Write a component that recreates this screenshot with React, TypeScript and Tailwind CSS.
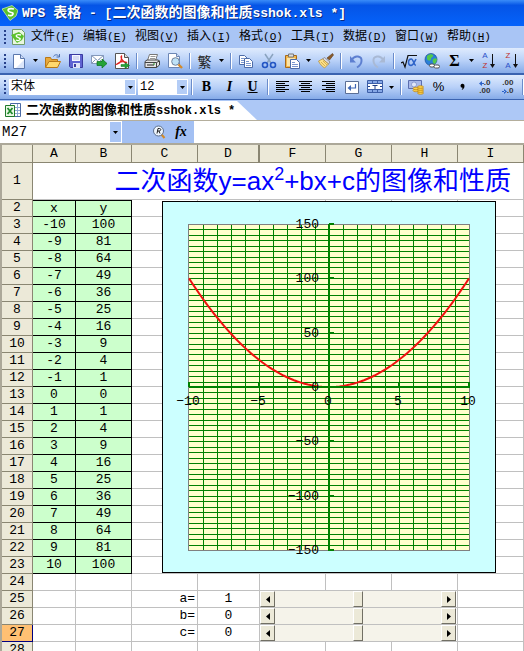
import { useState } from "react";
import type { ReactNode } from "react";

const MONO = "font-['Liberation_Mono','Noto_Sans_CJK_SC',monospace]";

const menus = [
  ["文件", "F"],
  ["编辑", "E"],
  ["视图", "V"],
  ["插入", "I"],
  ["格式", "O"],
  ["工具", "T"],
  ["数据", "D"],
  ["窗口", "W"],
  ["帮助", "H"],
];

const columns = ["A", "B", "C", "D", "F", "G", "H", "I"];

function Svg({ children }: { children: ReactNode }) {
  return (
    <svg width="16" height="16" viewBox="0 0 16 16" aria-hidden="true">
      {children}
    </svg>
  );
}

const icons: Record<string, ReactNode> = {
  new: (
    <Svg>
      <path d="M2.500 1.500h7l4 4v10h-11z" fill="#fff" stroke="#5b78ad" />
      <path d="M5 15L13 7v8z" fill="#dbe6fa" />
      <path d="M9.500 1.500v4h4" fill="#cfdcf5" stroke="#5b78ad" />
    </Svg>
  ),
  open: (
    <Svg>
      <path d="M.5 14V4.500h5l1 2h6V9" fill="#e8a93c" stroke="#b87818" />
      <path d="M.5 14.500L4 8.500h11.500l-3 6z" fill="#ffd86e" stroke="#b87818" />
      <path d="M8.500 3.500c1-2 4-2.500 5.500 0M14.500 1v3h-3" fill="none" stroke="#4b6fb0" />
    </Svg>
  ),
  save: (
    <Svg>
      <path d="M1.500 1.500h13v13h-12l-1-1z" fill="#5f63d2" stroke="#3a3aa0" />
      <path d="M4 2h8v6H4z" fill="#f4f6ff" />
      <path d="M5 4h6M5 6h6" stroke="#b9c1e6" />
      <path d="M5 10h7v5H5z" fill="#dfe3f7" />
      <path d="M6 11h2v3H6z" fill="#3a3aa0" />
    </Svg>
  ),
  mail: (
    <Svg>
      <path d="M.5 2.500h12v8H.5z" fill="#fff" stroke="#8499bb" />
      <path d="M.5 2.500l6 5 6-5M.5 10.500l4-4M12.500 10.500l-4-4" fill="none" stroke="#8499bb" />
      <path d="M6 8.500h5V6l5 4.500-5 4.500v-2.500H6z" fill="#25a336" stroke="#087018" strokeWidth=".7" />
    </Svg>
  ),
  pdf: (
    <Svg>
      <path d="M1.500.5h9l4 4v11h-13z" fill="#fff" stroke="#555" />
      <path d="M10.500.5v4h4" fill="#ddd" stroke="#555" />
      <path d="M3 11c4-1 5-4 4.500-8C6 4 9 10 13 9.500 9 8 5 9 3 11z" fill="none" stroke="#e02020" strokeWidth="1.300" />
      <path d="M7 11.500h4V9.500l4.500 3-4.500 3v-2H7z" fill="#25a336" stroke="#087018" strokeWidth=".5" />
    </Svg>
  ),
  print: (
    <Svg>
      <path d="M5.500 1.500h8l-2 6h-8z" fill="#fff" stroke="#777" />
      <path d="M6.500 3.500h5M6 5.500h5" stroke="#999" />
      <path d="M1 8.500L3 7h11l1.500 1v4l-3 2.500H1z" fill="#e4e4e4" stroke="#444" />
      <path d="M1 9.500h11.500l3-1.500M12.500 9.500v5" fill="none" stroke="#444" />
      <path d="M3 12h7" stroke="#222" />
      <path d="M9 11h2" stroke="#2a9b2a" />
    </Svg>
  ),
  preview: (
    <Svg>
      <path d="M1.500.5h8l3 3v11h-11z" fill="#fff" stroke="#6d87b5" />
      <path d="M9.500.5v3h3" fill="#cfdcf5" stroke="#6d87b5" />
      <circle cx="8.500" cy="8.500" r="3.800" fill="#bfe2f7" stroke="#71829b" />
      <path d="M11.500 11.500l3.500 3.500" stroke="#d48a28" strokeWidth="2.400" />
    </Svg>
  ),
  copy: (
    <Svg>
      <path d="M1.500 2.500h5l3 3v6h-8z" fill="#fff" stroke="#4d6ca8" />
      <path d="M3 5.500h3M3 7.500h4M3 9.500h4" stroke="#7b97cf" />
      <path d="M6.500 5.500h5l3 3v6h-8z" fill="#fff" stroke="#4d6ca8" />
      <path d="M8 8.500h3M8 10.500h5M8 12.500h5" stroke="#7b97cf" />
    </Svg>
  ),
  cut: (
    <Svg>
      <path d="M4 1l6 9M12 1L6 10" stroke="#8aa3bf" strokeWidth="1.500" />
      <circle cx="4" cy="12" r="2.500" fill="none" stroke="#2255c4" strokeWidth="1.600" />
      <circle cx="12" cy="12" r="2.500" fill="none" stroke="#2255c4" strokeWidth="1.600" />
    </Svg>
  ),
  paste: (
    <Svg>
      <path d="M1.500 2.500h11v12h-11z" fill="#f2b84c" stroke="#a5681c" />
      <path d="M4.500 1h5v3h-5z" fill="#ddd" stroke="#777" />
      <path d="M3 5h8v8H3z" fill="#fbe3a8" />
      <path d="M6.500 6.500h6l3 3v6h-9z" fill="#fff" stroke="#4d6ca8" />
      <path d="M8 9.500h3M8 11.500h6M8 13.500h6" stroke="#7b97cf" />
    </Svg>
  ),
  brush: (
    <Svg>
      <path d="M14.500.5l1 1.500-4 5-2.500-2z" fill="#8a5a2a" stroke="#5d3a14" strokeWidth=".6" />
      <path d="M6.500 4.500l5.500 4.500-1.500 2-6-5z" fill="#d8d8e4" stroke="#777" strokeWidth=".7" />
      <path d="M4.500 6l6 5-4 4C4 13 2 11.500.5 8z" fill="#fbe08a" stroke="#b58a30" strokeWidth=".7" />
      <path d="M3 9l4 4M5 8l4 4" stroke="#c99c3c" strokeWidth=".7" />
    </Svg>
  ),
  undo: (
    <Svg>
      <path d="M4 6.500C7 1.500 14 3 13.500 8c-.2 3-2 5-4.500 6.500" fill="none" stroke="#5d7fd0" strokeWidth="2" />
      <path d="M2 3v6.500h6z" fill="#5d7fd0" />
    </Svg>
  ),
  redo: (
    <Svg>
      <path d="M12 6.500C9 1.500 2 3 2.500 8c.2 3 2 5 4.500 6.500" fill="none" stroke="#a9b9d4" strokeWidth="2" />
      <path d="M14 3v6.500H8z" fill="#a9b9d4" />
    </Svg>
  ),
  sqrt: (
    <Svg>
      <path d="M0 10l2-1 2 5L7 2.500h9" fill="none" stroke="#111" strokeWidth="1.200" />
      <path d="M15 6c-1.500 3-3 6.500-5 6.500s-2.500-1.500-2.500-3.200S8.500 6 10.300 6c2.200 0 2.200 6 4.500 6.500" fill="none" stroke="#2d63c8" strokeWidth="1.500" />
    </Svg>
  ),
  globe: (
    <Svg>
      <circle cx="7" cy="6.500" r="6" fill="#2a7fd8" stroke="#1a4d91" strokeWidth=".7" />
      <path d="M3 3c2-2 5-2 6-1 1 2-2 2-2 4S4 8 3 6zM9 6c2-1 3-1 4 0 0 3-2 5-3 5-1-1-2-3-1-5z" fill="#55c94a" />
      <rect x="5.500" y="11" width="5" height="3" rx="1.500" fill="#fff" stroke="#555" />
      <rect x="10" y="12" width="5.500" height="3" rx="1.500" fill="#fff" stroke="#555" />
    </Svg>
  ),
  left: (
    <Svg>
      <path d="M1 2.500h13M1 4.500h9M1 6.500h13M1 8.500h9M1 10.500h13M1 12.500h9" stroke="#000" />
    </Svg>
  ),
  center: (
    <Svg>
      <path d="M1 2.500h13M3 4.500h9M1 6.500h13M3 8.500h9M1 10.500h13M3 12.500h9" stroke="#000" />
    </Svg>
  ),
  right: (
    <Svg>
      <path d="M1 2.500h13M5 4.500h9M1 6.500h13M5 8.500h9M1 10.500h13M5 12.500h9" stroke="#000" />
    </Svg>
  ),
  wrap: (
    <Svg>
      <path d="M1.500 2.500h13v12h-13z" fill="#fff" stroke="#5b6f96" />
      <path d="M11.500 5v4h-6" fill="none" stroke="#3d66b5" strokeWidth="1.200" />
      <path d="M3.500 9l3.500-3v6z" fill="#3d66b5" />
    </Svg>
  ),
  merge: (
    <Svg>
      <path d="M.5 1.500h15v12H.5z" fill="#fff" stroke="#3d5fa8" />
      <path d="M1 2h14v2H1zM1 11h14v2H1z" fill="#87a8e6" />
      <path d="M.5 4.500h15M.5 10.500h15M5.500 1.500v3M10.500 1.500v3M5.500 10.500v3M10.500 10.500v3" stroke="#3d5fa8" />
      <path d="M5.500 6.500h5M8 6.500v3.500M1 7.500h2M13 7.500h2" stroke="#223f85" />
    </Svg>
  ),
  money: (
    <Svg>
      <path d="M.5 1.500h13v8H.5z" fill="#a9b9ea" stroke="#5a6dae" />
      <circle cx="6" cy="5.500" r="2.500" fill="#dfe6fa" stroke="#6a7cba" strokeWidth=".6" />
      <g fill="#ffd34a" stroke="#b88316" strokeWidth=".7">
        <ellipse cx="8" cy="11.500" rx="3" ry="1.300" />
        <ellipse cx="8" cy="9.500" rx="3" ry="1.300" />
        <ellipse cx="12.500" cy="14" rx="3" ry="1.300" />
        <ellipse cx="12.500" cy="12" rx="3" ry="1.300" />
        <ellipse cx="12.500" cy="10" rx="3" ry="1.300" />
        <ellipse cx="12.500" cy="8" rx="3" ry="1.300" />
      </g>
    </Svg>
  ),
  comma: (
    <Svg>
      <path d="M6.500 6.500a2 2 0 1 1 4 .5c0 2-1.200 3.500-3 4 .8-1 1-1.500 1-2.300A2 2 0 0 1 6.500 6.500z" fill="#000" />
    </Svg>
  ),
};

function Caret() {
  return (
    <svg width="5" height="3" viewBox="0 0 5 3" aria-hidden="true">
      <path d="M0 0h5L2.500 3z" fill="#000" />
    </svg>
  );
}

function Tool({ label, children }: { label: string; children: ReactNode }) {
  return (
    <button
      aria-label={label}
      className="flex h-6 w-[23px] shrink-0 items-center justify-center"
    >
      {children}
    </button>
  );
}

function DropArrow({ label }: { label: string }) {
  return (
    <button
      aria-label={label}
      className="flex h-6 w-[11px] shrink-0 items-center justify-center"
    >
      <Caret />
    </button>
  );
}

function Separator() {
  return (
    <div className="flex w-[7px] shrink-0 justify-center">
      <div className="h-4 w-[2px] border-r border-white bg-[#6a8ccb]" />
    </div>
  );
}

function Grip() {
  return (
    <div className="flex w-[7px] shrink-0 flex-col items-end gap-[2px] pr-[1px]">
      {[0, 1, 2, 3].map((i) => (
        <div key={i} className="size-[2px] bg-[#27418a]" />
      ))}
    </div>
  );
}

function SortIcon({ top, bottom }: { top: string; bottom: string }) {
  return (
    <span className="flex items-center gap-[2px] font-['Liberation_Sans',sans-serif] text-[8px] leading-[10px]">
      <span className="flex flex-col">
        <span className={top === "A" ? "text-[#2d52c8]" : "text-[#c03030]"}>{top}</span>
        <span className={bottom === "A" ? "text-[#2d52c8]" : "text-[#c03030]"}>{bottom}</span>
      </span>
      <svg width="5" height="14" viewBox="0 0 5 14" aria-hidden="true">
        <path d="M2.500 0v12" stroke="#111" />
        <path d="M0 10h5l-2.500 4z" fill="#111" />
      </svg>
    </span>
  );
}

function Decimals({ more }: { more?: boolean }) {
  return (
    <span className="flex flex-col items-end font-['Liberation_Sans',sans-serif] text-[8px] leading-[8px] font-bold text-[#333]">
      <span className="flex items-center">
        {more && (
          <svg width="5" height="5" viewBox="0 0 5 5" aria-hidden="true">
            <path d="M0 2.500L3 0v5zM2 2h3v1H2z" fill="#2d63c8" />
          </svg>
        )}
        {more ? ".0" : ".00"}
      </span>
      <span className="flex items-center">
        {!more && (
          <svg width="5" height="5" viewBox="0 0 5 5" aria-hidden="true">
            <path d="M5 2.500L2 0v5zM0 2h3v1H0z" fill="#2d63c8" />
          </svg>
        )}
        {more ? ".00" : ".0"}
      </span>
    </span>
  );
}

function TitleBar() {
  return (
    <header className="flex h-[26px] shrink-0 items-center bg-linear-to-b from-[#3a8cf8] via-[#0554e6] via-20% to-[#0563fb] pl-[2px] font-bold text-white">
      <svg width="16" height="16" viewBox="0 0 16 16" aria-hidden="true">
        <path d="M0 4l10-3.500 6 5-2 5.500-6 4.500z" fill="#5cc22c" stroke="#d5f5b8" strokeWidth=".7" />
        <path d="M12 4C8 3 5 4 6.500 6s5 1 4.500 3-3 2-5 1" fill="none" stroke="#fff" strokeWidth="1.700" />
      </svg>
      <h1 className={`${MONO} ml-1 text-[13px] whitespace-pre [text-shadow:1px_1px_0_#0a2a80]`}>
        WPS <span className="text-[14px]">表格</span> - [
        <span className="text-[14px]">二次函数的图像和性质</span>sshok.xls *]
      </h1>
    </header>
  );
}

function MenuBar() {
  return (
    <nav className="flex h-[22px] shrink-0 items-center bg-[#a9c5f5]">
      <Grip />
      <svg className="ml-1 shrink-0" width="15" height="16" viewBox="0 0 15 16" aria-hidden="true">
        <path d="M1.500.5h9l3 3v12h-12z" fill="#e9f7e0" stroke="#6f9d68" />
        <path d="M0 6l8-3 5 4-2 4-5 3z" fill="#5cc22c" />
        <path d="M10 6C6 5 4 6.500 6 8s4 1 3 2.500-3 1-4 .5" fill="none" stroke="#fff" strokeWidth="1.300" />
      </svg>
      <div className="ml-[5px] flex">
        {menus.map(([name, key]) => (
          <button key={key} className={`${MONO} w-[52px] text-left text-[12px] leading-4 whitespace-nowrap`}>
            {name}
            <span className="text-[11px]">
              (<u>{key}</u>)
            </span>
          </button>
        ))}
      </div>
    </nav>
  );
}

const barClass =
  "flex shrink-0 items-center overflow-hidden border-b border-[#3a63b0] bg-linear-to-b from-[#dfebfd] via-[#b9d1f8] to-[#86abe8]";

function StandardBar() {
  return (
    <div className={`${barClass} h-[26px]`}>
      <Grip />
      <Tool label="新建">{icons.new}</Tool>
      <DropArrow label="新建选项" />
      <Tool label="打开">{icons.open}</Tool>
      <Tool label="保存">{icons.save}</Tool>
      <Tool label="邮件">{icons.mail}</Tool>
      <Tool label="输出为PDF">{icons.pdf}</Tool>
      <Separator />
      <Tool label="打印">{icons.print}</Tool>
      <Tool label="打印预览">{icons.preview}</Tool>
      <Separator />
      <Tool label="繁体">
        <span className="font-['Noto_Sans_CJK_SC',sans-serif] text-[14px] leading-4 text-[#222]">繁</span>
      </Tool>
      <DropArrow label="繁体选项" />
      <Separator />
      <Tool label="复制">{icons.copy}</Tool>
      <Tool label="剪切">{icons.cut}</Tool>
      <Tool label="粘贴">{icons.paste}</Tool>
      <DropArrow label="粘贴选项" />
      <Tool label="格式刷">{icons.brush}</Tool>
      <Separator />
      <Tool label="撤消">{icons.undo}</Tool>
      <Tool label="恢复">{icons.redo}</Tool>
      <Separator />
      <Tool label="公式">{icons.sqrt}</Tool>
      <Tool label="超链接">{icons.globe}</Tool>
      <Tool label="求和">
        <span className="font-['Liberation_Serif',serif] text-[16px] leading-4 font-bold">Σ</span>
      </Tool>
      <DropArrow label="求和选项" />
      <Tool label="升序">
        <SortIcon top="A" bottom="Z" />
      </Tool>
      <Tool label="降序">
        <SortIcon top="Z" bottom="A" />
      </Tool>
    </div>
  );
}

function BarSelect({ label, value, className }: { label: string; value: string; className: string }) {
  return (
    <div className={`relative h-4 shrink-0 ${className}`}>
      <select
        aria-label={label}
        className={`${MONO} block h-4 w-full appearance-none bg-white pl-[2px] text-[12px] leading-4`}
      >
        <option>{value}</option>
      </select>
      <span className="pointer-events-none absolute inset-y-0 right-0 flex w-3 items-center justify-center border border-white bg-[#b4cdf6]">
        <Caret />
      </span>
    </div>
  );
}

function FormatBar() {
  return (
    <div className={`${barClass} h-[26px] border-t`}>
      <Grip />
      <BarSelect label="字体" value="宋体" className="ml-[2px] w-[127px]" />
      <BarSelect label="字号" value="12" className="ml-[2px] w-[50px]" />
      <Separator />
      <div className="flex font-['Liberation_Serif',serif] text-[14px] leading-4 font-bold">
        <Tool label="加粗">B</Tool>
        <Tool label="倾斜">
          <i>I</i>
        </Tool>
        <Tool label="下划线">
          <u>U</u>
        </Tool>
      </div>
      <Separator />
      <Tool label="左对齐">{icons.left}</Tool>
      <Tool label="居中">{icons.center}</Tool>
      <Tool label="右对齐">{icons.right}</Tool>
      <Tool label="自动换行">{icons.wrap}</Tool>
      <Tool label="合并居中">{icons.merge}</Tool>
      <DropArrow label="合并选项" />
      <Separator />
      <Tool label="货币">{icons.money}</Tool>
      <Tool label="百分比">
        <span className="font-['Liberation_Sans',sans-serif] text-[13px] leading-4">%</span>
      </Tool>
      <Tool label="千位分隔">{icons.comma}</Tool>
      <Tool label="增加小数位">
        <Decimals more />
      </Tool>
      <Tool label="减少小数位">
        <Decimals />
      </Tool>
      <Separator />
    </div>
  );
}

function DocumentTabs() {
  return (
    <div className="flex h-[21px] shrink-0 items-end border-b border-[#b4ae9c] bg-[#adc8f6]">
      <button className="flex h-[19px] w-[257px] items-center bg-white pl-[5px] [clip-path:polygon(0_0,237px_0,100%_100%,0_100%)]">
        <svg width="16" height="16" viewBox="0 0 16 16" aria-hidden="true">
          <path d="M5.500.5h10v13h-10z" fill="#fff" stroke="#4b6aa5" />
          <path d="M10 4.500h5M10 7.500h5M10 10.500h5M12.500 1v12" stroke="#8fa9d4" />
          <path d="M.5 2.500h9v11h-9z" fill="#e9f7e4" stroke="#1f7a2c" />
          <path d="M2.500 5l5 6M7.500 5l-5 6" stroke="#1f8a2c" strokeWidth="1.800" />
        </svg>
        <span className={`${MONO} ml-[5px] text-[12px] leading-4 font-bold whitespace-pre`}>
          <span className="text-[13px]">二次函数的图像和性质</span>sshok.xls *
        </span>
      </button>
    </div>
  );
}

function FormulaBar() {
  return (
    <div className="flex h-[22px] shrink-0 bg-[#a3c0f3]">
      <div className="flex w-[122px] items-center bg-white">
        <input
          aria-label="名称框"
          defaultValue="M27"
          className={`${MONO} w-0 flex-1 pl-[2px] text-[14px] leading-5`}
        />
        <button
          aria-label="名称列表"
          className="mr-px flex h-5 w-[11px] items-center justify-center bg-[#a9c5f5]"
        >
          <Caret />
        </button>
      </div>
      <div className="flex w-[72px] items-center justify-end gap-1 pr-[3px]">
        <button aria-label="查找">
          <svg width="16" height="16" viewBox="0 0 16 16" aria-hidden="true">
            <path d="M10 10l3.500 4" stroke="#d48a28" strokeWidth="2" />
            <circle cx="7.500" cy="7" r="5" fill="#eef6ff" stroke="#5d6f8c" />
            <path d="M6 9.500l1-5h1.500c2 0 1.500 2.500-.5 2.500H6.500M8 7l1 2.500" fill="none" stroke="#222" />
          </svg>
        </button>
        <button
          aria-label="插入函数"
          className="w-5 font-['Liberation_Serif',serif] text-[14px] leading-5 font-bold italic"
        >
          fx
        </button>
      </div>
      <input aria-label="编辑栏" className="w-0 flex-1 bg-white" />
    </div>
  );
}

function Chart() {
  const px = (x: number) => 167 + x * 14;
  const py = (y: number) => Math.round(186 - (y * 163) / 150);
  const xs = Array.from({ length: 19 }, (_, i) => i - 9);
  const ys = Array.from({ length: 59 }, (_, i) => 145 - i * 5);
  const curve = Array.from({ length: 81 }, (_, i) => i / 4 - 10)
    .map((x) => `${px(x)},${186 - (x * x * 163) / 150}`)
    .join(" ");

  return (
    <svg
      className={`${MONO} absolute top-[56px] left-[162px] text-[13px]`}
      width="334"
      height="372"
      viewBox="0 0 334 372"
      role="img"
      aria-label="y=ax²+bx+c"
    >
      <rect x=".5" y=".5" width="333" height="371" fill="#ccffff" stroke="#000" />
      <g shapeRendering="crispEdges">
        <rect x="26.500" y="23.500" width="281" height="326" fill="#ffffcc" stroke="#808080" />
        <g stroke="#008000">
          {xs.map((x) => (
            <path key={x} d={`M${px(x) + 0.5} 24V349`} />
          ))}
          {ys.map((y) => (
            <path key={y} d={`M27 ${py(y) + 0.5}H307`} />
          ))}
        </g>
      </g>
      <polyline points={curve} fill="none" stroke="#f01010" strokeWidth="2" />
      <g shapeRendering="crispEdges" stroke="#008000" strokeWidth="2">
        <path d="M167 23V350M27 186H308" />
        {[150, 100, 50, -50, -100, -150].map((y) => (
          <path key={y} d={`M167 ${py(y)}h5`} />
        ))}
        {[-10, -5, 5, 10].map((x) => (
          <path key={x} d={`M${px(x)} 186v-5`} />
        ))}
      </g>
      {[150, 100, 50, 0, -50, -100, -150].map((y) => (
        <text key={y} x="157" y={py(y) + 4} textAnchor="end">
          {String(y).replace("-", "−")}
        </text>
      ))}
      {[-10, -5, 0, 5, 10].map((x) => (
        <text key={x} x={px(x) - 1} y="204" textAnchor="middle">
          {String(x).replace("-", "−")}
        </text>
      ))}
    </svg>
  );
}

const arrowButton =
  "flex h-4 w-[15px] items-center justify-center border border-t-white border-l-white border-r-[#716f64] border-b-[#716f64] bg-[#ece9d8]";

function ScrollControl({ label }: { label: string }) {
  const [value, setValue] = useState(50);

  return (
    <div className="flex h-4 w-[196px] bg-[#f6f5ec]">
      <button aria-label={`${label} −`} className={arrowButton} onClick={() => setValue(value - 1)}>
        <svg width="4" height="7" viewBox="0 0 4 7" aria-hidden="true">
          <path d="M4 0v7L0 3.500z" fill="#000" />
        </svg>
      </button>
      <input
        type="range"
        aria-label={label}
        value={value}
        onChange={(e) => setValue(Number(e.target.value))}
        className="h-4 w-0 flex-1 appearance-none bg-[#f5f3ea] [&::-webkit-slider-thumb]:h-4 [&::-webkit-slider-thumb]:w-[10px] [&::-webkit-slider-thumb]:appearance-none [&::-webkit-slider-thumb]:border [&::-webkit-slider-thumb]:border-t-white [&::-webkit-slider-thumb]:border-r-[#716f64] [&::-webkit-slider-thumb]:border-b-[#716f64] [&::-webkit-slider-thumb]:border-l-white [&::-webkit-slider-thumb]:bg-[#ece9d8]"
      />
      <button aria-label={`${label} +`} className={arrowButton} onClick={() => setValue(value + 1)}>
        <svg width="4" height="7" viewBox="0 0 4 7" aria-hidden="true">
          <path d="M0 0v7l4-3.500z" fill="#000" />
        </svg>
      </button>
    </div>
  );
}

const cell = "h-[17px] border-r border-b border-[#c0c0c0] p-0";
const greenCell = "h-[17px] border-r border-b border-black bg-[#ccffcc] p-0 text-center";
const params: Record<number, [string, number]> = { 25: ["a", 1], 26: ["b", 0], 27: ["c", 0] };

function Row({ n }: { n: number }) {
  const x = n - 13;
  const param = params[n];
  const top = n === 2 ? "border-t leading-[15px]" : "";

  return (
    <tr>
      <th
        className={`h-[17px] border-r border-b p-0 font-normal ${
          n === 27 ? "border-[#000080] bg-[#ffc073]" : "border-[#8a8672] bg-[#ece9d8]"
        }`}
      >
        {n}
      </th>
      {n <= 23 ? (
        <>
          <td className={`${greenCell} ${top}`}>{n === 2 ? "x" : x}</td>
          <td className={`${greenCell} ${top}`}>{n === 2 ? "y" : x * x}</td>
        </>
      ) : (
        <>
          <td className={cell} />
          <td className={cell} />
        </>
      )}
      <td className={`${cell} pr-[2px] text-right`}>{param && `${param[0]}=`}</td>
      <td className={`${cell} text-center`}>{param && param[1]}</td>
      {param ? (
        <td colSpan={3} className={cell}>
          <ScrollControl label={param[0]} />
        </td>
      ) : (
        <>
          <td className={cell} />
          <td className={cell} />
          <td className={cell} />
        </>
      )}
      <td className={cell} />
    </tr>
  );
}

function Sheet() {
  const rows = Array.from({ length: 27 }, (_, i) => i + 2);

  return (
    <main className="min-h-0 flex-1 overflow-hidden border-t-2 border-[#aca899]">
      <div className="relative">
        <table
          className={`${MONO} w-full table-fixed border-separate border-spacing-0 border-l-2 border-[#aca899] text-[13px] leading-4`}
        >
          <colgroup>
            <col className="w-[31px]" />
            <col className="w-[43px]" />
            <col className="w-[56px]" />
            <col className="w-[66px]" />
            <col className="w-[62px]" />
            <col className="w-[66px]" />
            <col className="w-[66px]" />
            <col className="w-[66px]" />
            <col />
          </colgroup>
          <thead>
            <tr>
              <th className="h-[18px] border-r border-b border-[#8a8672] bg-[#ece9d8] p-0" />
              {columns.map((c) => (
                <th
                  key={c}
                  className={`h-[18px] border-b border-[#8a8672] bg-[#ece9d8] p-0 pt-px font-normal ${
                    c === "D" ? "border-r-2" : "border-r"
                  }`}
                >
                  {c}
                </th>
              ))}
            </tr>
          </thead>
          <tbody>
            <tr>
              <th className="h-[37px] border-r border-b border-[#8a8672] bg-[#ece9d8] p-0 font-normal">1</th>
              <td
                colSpan={8}
                className="h-[37px] border-r border-b border-[#c0c0c0] p-0 pr-3 text-right font-['Liberation_Sans','Noto_Sans_CJK_SC',sans-serif] text-[26px] leading-9 whitespace-nowrap text-[#0000ff]"
              >
                二次函数y=ax<sup className="top-[-10px] text-[18px] leading-none">2</sup>+bx+c的图像和性质
              </td>
            </tr>
            {rows.map((n) => (
              <Row key={n} n={n} />
            ))}
          </tbody>
        </table>
        <Chart />
      </div>
    </main>
  );
}

export default function App() {
  return (
    <div className="flex h-screen flex-col overflow-hidden bg-white text-black">
      <TitleBar />
      <MenuBar />
      <StandardBar />
      <FormatBar />
      <DocumentTabs />
      <FormulaBar />
      <Sheet />
    </div>
  );
}
